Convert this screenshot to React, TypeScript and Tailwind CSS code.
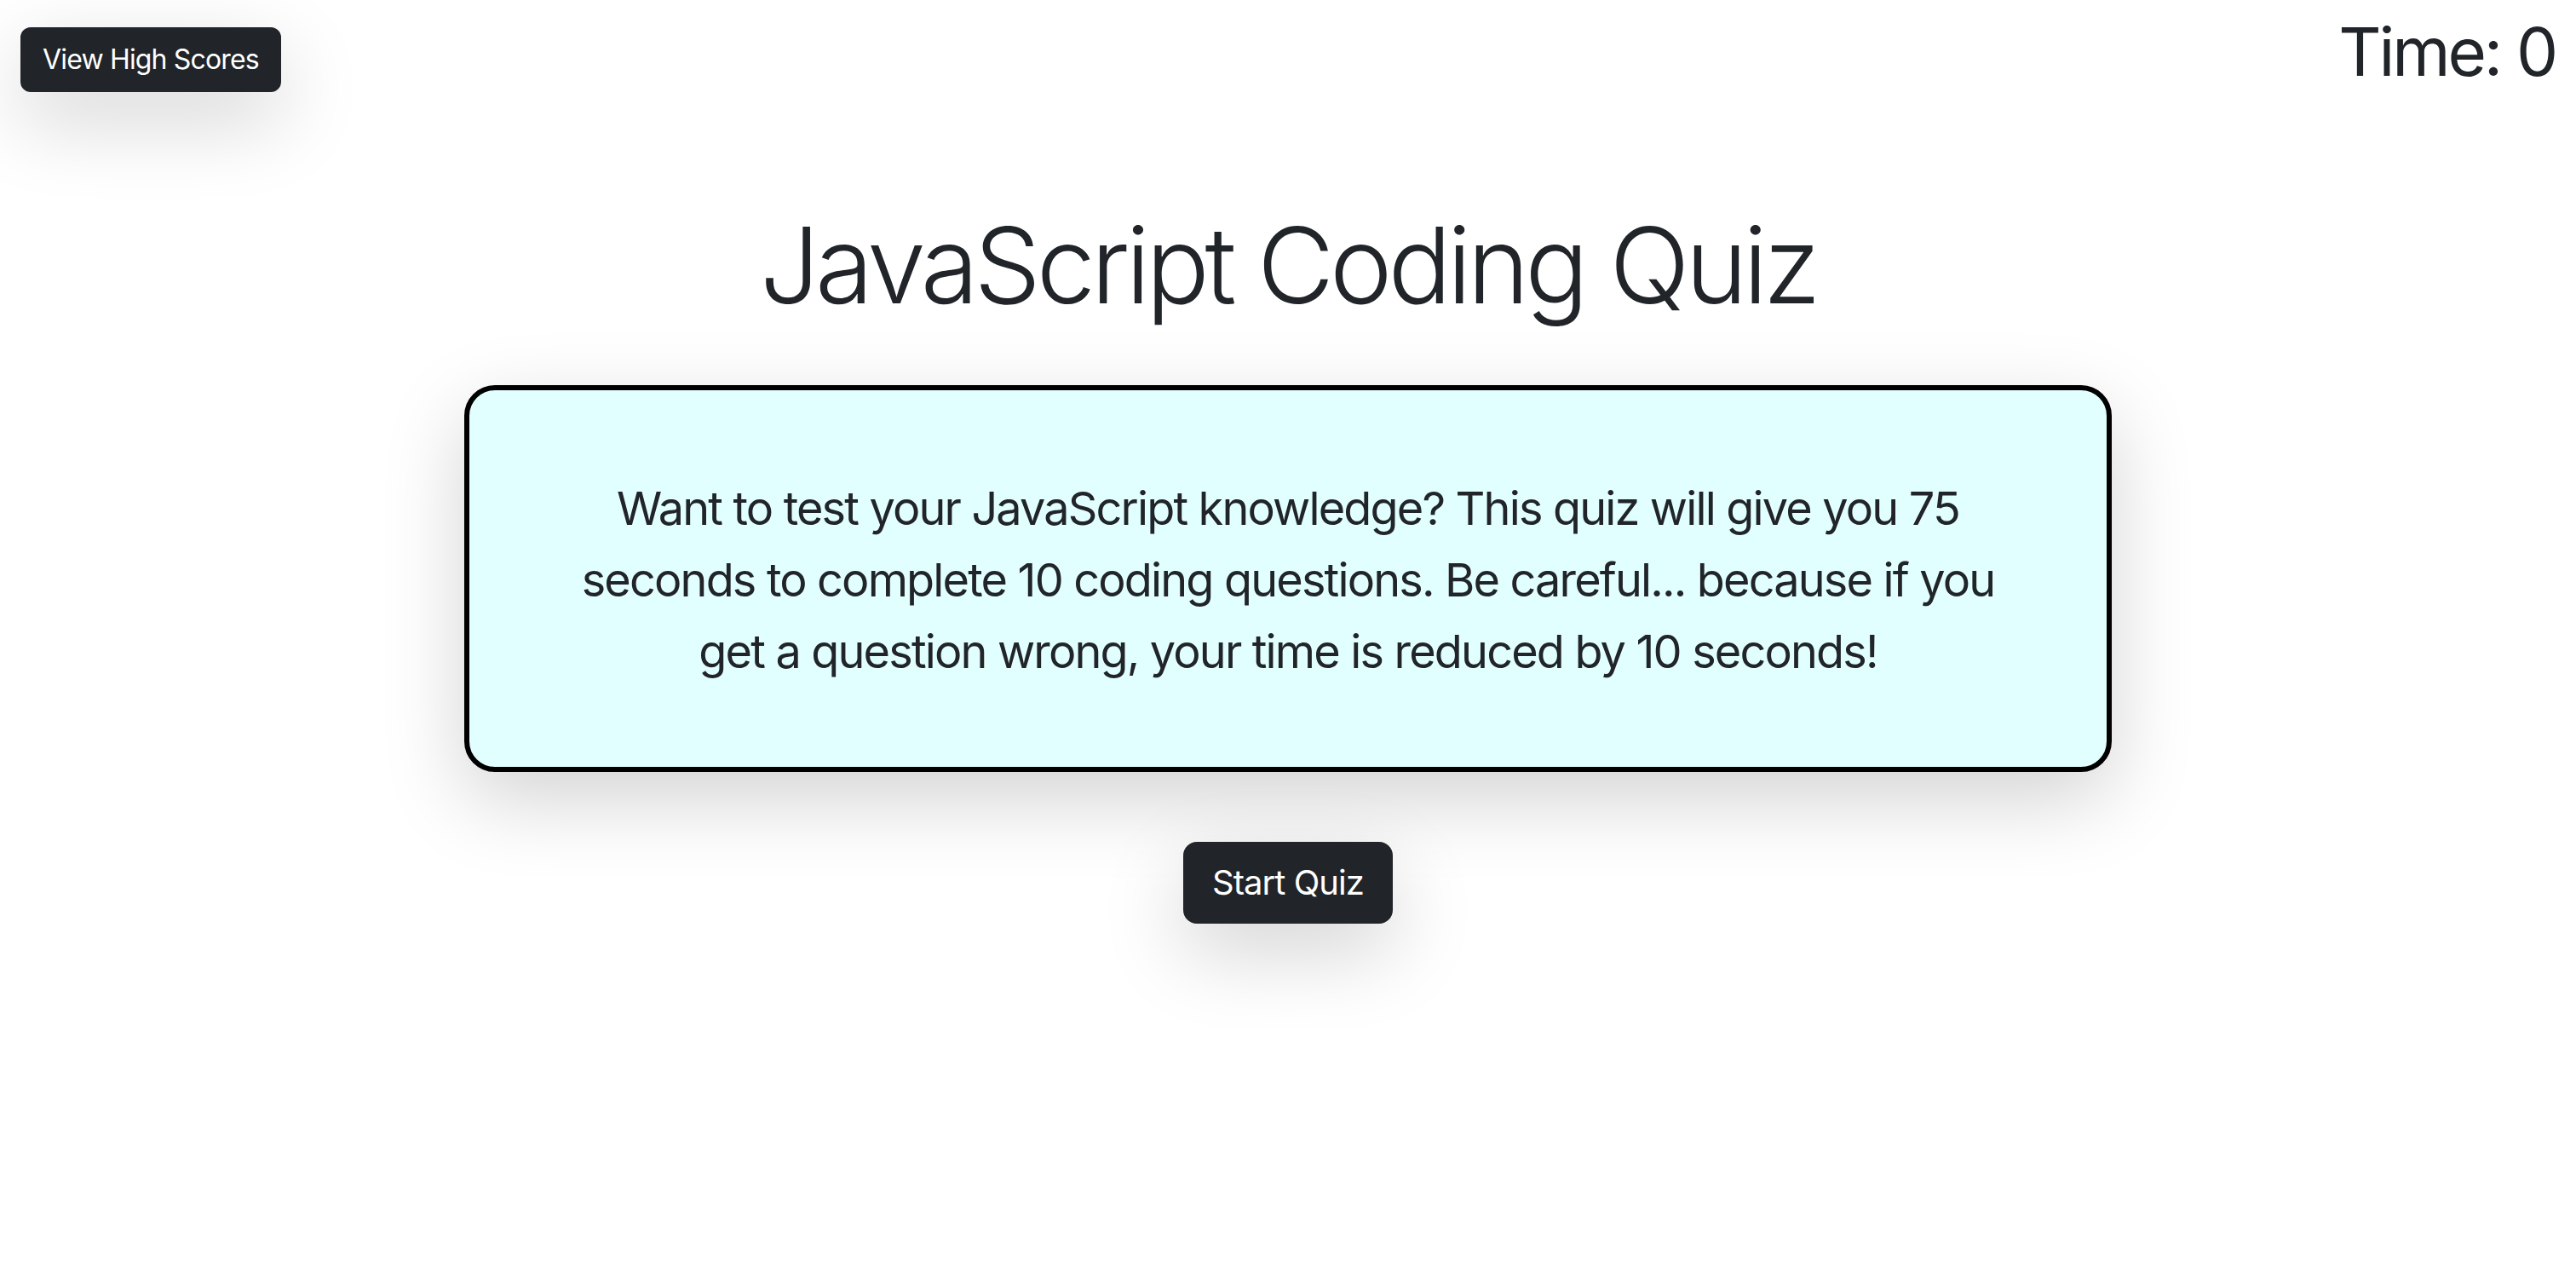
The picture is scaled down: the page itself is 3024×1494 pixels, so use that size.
import React from "react";

export default function App() {
  return (
    <div
      className="min-h-screen bg-white text-[#212529]"
      style={{ fontFamily: 'Inter, "Noto Sans", "Liberation Sans", sans-serif' }}
    >
      <header className="flex items-start justify-between px-[24px]">
        <button className="mt-[32px] rounded-[12px] border-2 border-[#212529] bg-[#212529] px-[24px] py-[12px] text-[32px] leading-[48px] tracking-[-0.026em] text-white shadow-[0_32px_96px_rgba(0,0,0,0.175)]">
          View High Scores
        </button>
        <div className="mt-[14px] text-[78px] font-normal leading-[1.2] tracking-[-0.04em]">Time: 0</div>
      </header>

      <main className="flex flex-col items-center">
        <h1 className="mt-[129px] text-center text-[124px] font-light leading-[1.2] tracking-[-0.042em]">
          JavaScript Coding Quiz
        </h1>

        <section className="mt-[66px] w-[1934px] rounded-[36px] border-[6px] border-black bg-[#e1ffff] pt-[97px] pb-[93px] shadow-[0_32px_96px_rgba(0,0,0,0.175)]">
          <p className="text-center text-[54px] leading-[84px] tracking-[-0.034em]">
            <span className="block">Want to test your JavaScript knowledge? This quiz will give you 75</span>
            <span className="block">seconds to complete 10 coding questions. Be careful... because if you</span>
            <span className="block">get a question wrong, your time is reduced by 10 seconds!</span>
          </p>
        </section>

        <button className="mt-[82px] rounded-[16px] border-2 border-[#212529] bg-[#212529] px-[32px] py-[16px] text-[40px] leading-[60px] tracking-[-0.024em] text-white shadow-[0_32px_96px_rgba(0,0,0,0.175)]">
          Start Quiz
        </button>
      </main>
    </div>
  );
}
